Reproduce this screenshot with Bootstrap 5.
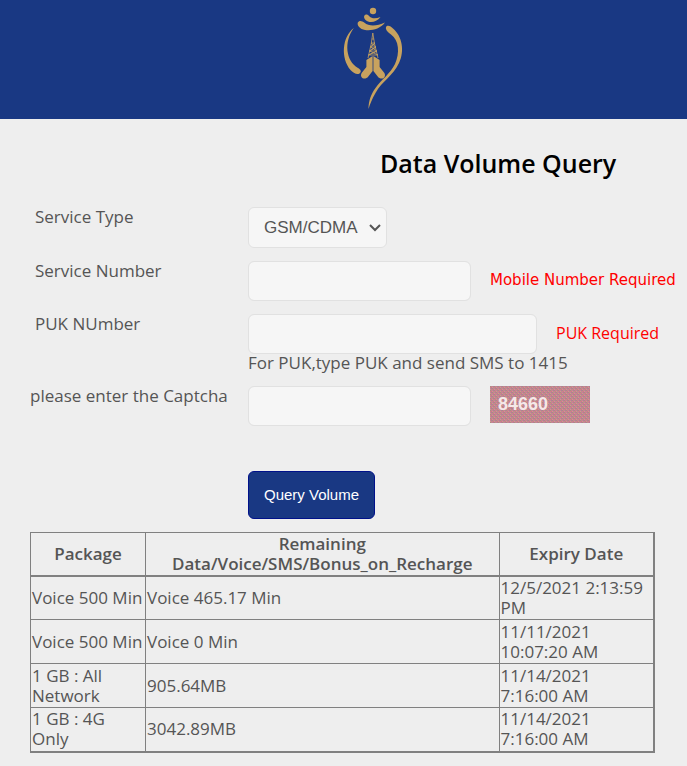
<!DOCTYPE html>
<html lang="en">
<head>
<meta charset="utf-8">
<meta name="viewport" content="width=device-width, initial-scale=1">
<title>Data Volume Query</title>
<link href="https://cdn.jsdelivr.net/npm/bootstrap@5.3.0/dist/css/bootstrap.min.css" rel="stylesheet">
<style>
body { background: #eee; color: #555; font: 17px/20px "Trebuchet MS", "Open Sans", sans-serif; }
.site-header { background: #193883; padding: 5px 0 4px 62px; }
.page-title { font-size: 25px; line-height: 32px; font-weight: 600; color: #000; width: 55%; margin: 28px 0 28px auto; }
.query-form { padding-left: 30px; }
.field-row { display: grid; grid-template-columns: 218px 1fr; margin-bottom: 13px; }
.field-row label { padding-left: 5px; justify-self: start; }
.field-row .flush { padding-left: 0; }
.query-form .form-control, .query-form .form-select { background-color: #f6f6f6; border: 1px solid #e1e1e1; border-radius: 6px; height: 40px; color: #555; }
.query-form .form-control { width: 223px; }
.query-form .wide-input { width: 289px; }
.query-form .form-select { width: 139px; height: 41px; padding: 0 15px; font: 17px/20px "Liberation Sans", sans-serif; background-image: none; appearance: none; }
.select-wrap { width: 139px; }
.select-wrap svg { position: absolute; right: 6px; top: 16px; pointer-events: none; }
.field-line { gap: 19px; }
.error-text { color: #f00; font-size: 16px; line-height: 18px; padding-bottom: 2px; white-space: nowrap; }
.error-light { font-family: "DejaVu Sans", sans-serif; font-size: 15px; }
.help-line { margin-top: -1px; }
.btn-query { background: #193883; border: 1px solid #00118a; border-radius: 6px; color: #fff; height: 48px; padding: 0 15px; font: 15px/20px "Liberation Sans", sans-serif; margin: 32px 0 13px 248px; }
.btn-query:hover { background: #122b68; color: #fff; }
.table-area { padding: 0 32px 14px 30px; }
.result-table { width: 100%; border-collapse: collapse; table-layout: fixed; }
.result-table th, .result-table td { border: 1px solid #808080; padding: 1px; height: 43px; vertical-align: middle; }
.result-table tr + tr td { height: 44px; }
.result-table th { text-align: center; font-weight: 600; border-bottom-width: 2px; }
.result-table tr > :last-child { border-right-width: 2px; }
.result-table tbody tr:last-child td { border-bottom-width: 2px; }
.col-package { width: 115px; }
.col-expiry { width: 155px; }
</style>
<script src="https://cdn.jsdelivr.net/npm/bootstrap@5.3.0/dist/js/bootstrap.bundle.min.js"></script>
</head>
<body>
<header class="site-header d-flex justify-content-center">
  <svg width="80" height="110" viewBox="0 5 80 110" fill="#c8a25e" role="img" aria-label="Logo">
    <circle cx="38" cy="11" r="3.2"/>
    <path d="M29.3 15.7C30.5 13.8 32.8 14.4 34.3 16.2C37 19 41 18.6 45.5 17C42.5 21 38 22.6 34.5 21.9C30.8 21.2 28.2 18 29.3 15.7Z"/>
    <path d="M22.8 22.5C24 20.1 27 20.6 29.5 22.8C34 26.6 42 26.2 50 22.5C45 28.9 37 31 30 30C25 29.2 21.8 25.5 22.8 22.5Z"/>
    <path d="M18.8 28C7 37 5.5 58 15.5 70C18 73 22 75 24.5 73.5C27 71.5 25.5 69.5 23 68C11 61 8.5 42 18.8 28Z"/>
    <path d="M51.5 26.3C53.5 25 56 26.5 58 28.5C67 36 70 51 64 63C58 76 47 81 40.5 93C37 99 35 104 33.5 109C33.5 101 36 94 40.5 88C47 79 55 74 60 64C65 53 64 40 56 34.5C52.5 32 49.5 29 51.5 26.3Z"/>
    <path d="M31.4 60L37.6 56V71L33.3 76.5C31.5 79 27.8 79.2 26.5 77C25.6 75.5 26 73.7 27 72.4L31.4 67Z"/>
    <path d="M44.6 60L38.4 56V71L42.7 76.5C44.5 79 48.2 79.2 49.5 77C50.4 75.5 50 73.7 49 72.4L44.6 67Z"/>
    <path d="M37.8 33L36.2 44L33 58M37.8 33L39.6 44L43 58M36.8 39H39M36 43H40L35.5 47H41L34.5 51H42L33.5 55H43M36 43L41 47L34.5 51L43 55M40 43L35.5 47L42 51L33.5 55" fill="none" stroke="#c8a25e" stroke-width=".8"/>
  </svg>
</header>
<main>
  <h1 class="page-title text-center">Data Volume Query</h1>
  <form class="query-form">
    <div class="field-row">
      <label for="service-type">Service Type</label>
      <div class="select-wrap position-relative">
        <select id="service-type" class="form-select"><option>GSM/CDMA</option></select>
        <svg width="12" height="9" viewBox="0 0 12 9" fill="none" stroke="#555" stroke-width="2" aria-hidden="true"><path d="M1 2L6 7L11 2"/></svg>
      </div>
    </div>
    <div class="field-row">
      <label for="service-number">Service Number</label>
      <div class="field-line d-flex align-items-center">
        <input id="service-number" type="text" class="form-control">
        <span class="error-text error-light">Mobile Number Required</span>
      </div>
    </div>
    <div class="field-row">
      <label for="puk-number">PUK NUmber</label>
      <div>
        <div class="field-line d-flex align-items-center">
          <input id="puk-number" type="text" class="form-control wide-input">
          <span class="error-text">PUK Required</span>
        </div>
        <div class="help-line">For PUK,type PUK and send SMS to 1415</div>
      </div>
    </div>
    <div class="field-row">
      <label for="captcha" class="flush">please enter the Captcha</label>
      <div class="field-line d-flex">
        <input id="captcha" type="text" class="form-control">
        <svg width="100" height="37" role="img" aria-label="Captcha 84660">
          <defs>
            <pattern id="weave" width="4" height="4" patternUnits="userSpaceOnUse">
              <rect width="4" height="4" fill="#c48690"/>
              <path d="M0 0h1v1H0zM2 2h1v1H2z" fill="#a8907f"/>
              <path d="M1 1h1v1H1zM3 3h1v1H3z" fill="#d27787"/>
              <path d="M3 0h1v1H3zM1 2h1v1H1z" fill="#b07c9e"/>
              <path d="M0 3h1v1H0zM2 1h1v1H2z" fill="#cc9a8e"/>
            </pattern>
          </defs>
          <rect width="100" height="37" fill="url(#weave)"/>
          <text x="8" y="24" font-family="Liberation Sans, sans-serif" font-size="18" font-weight="700" fill="#f5e8e8">84660</text>
        </svg>
      </div>
    </div>
  </form>
  <button type="button" class="btn btn-query">Query Volume</button>
  <div class="table-area">
    <table class="result-table">
      <colgroup><col class="col-package"><col><col class="col-expiry"></colgroup>
      <thead><tr><th scope="col">Package</th><th scope="col">Remaining Data/Voice/SMS/Bonus_on_Recharge</th><th scope="col">Expiry Date</th></tr></thead>
      <tbody>
        <tr><td>Voice 500 Min</td><td>Voice 465.17 Min</td><td>12/5/2021 2:13:59 PM</td></tr>
        <tr><td>Voice 500 Min</td><td>Voice 0 Min</td><td>11/11/2021 10:07:20 AM</td></tr>
        <tr><td>1 GB : All Network</td><td>905.64MB</td><td>11/14/2021 7:16:00 AM</td></tr>
        <tr><td>1 GB : 4G Only</td><td>3042.89MB</td><td>11/14/2021 7:16:00 AM</td></tr>
      </tbody>
    </table>
  </div>
</main>
</body>
</html>
